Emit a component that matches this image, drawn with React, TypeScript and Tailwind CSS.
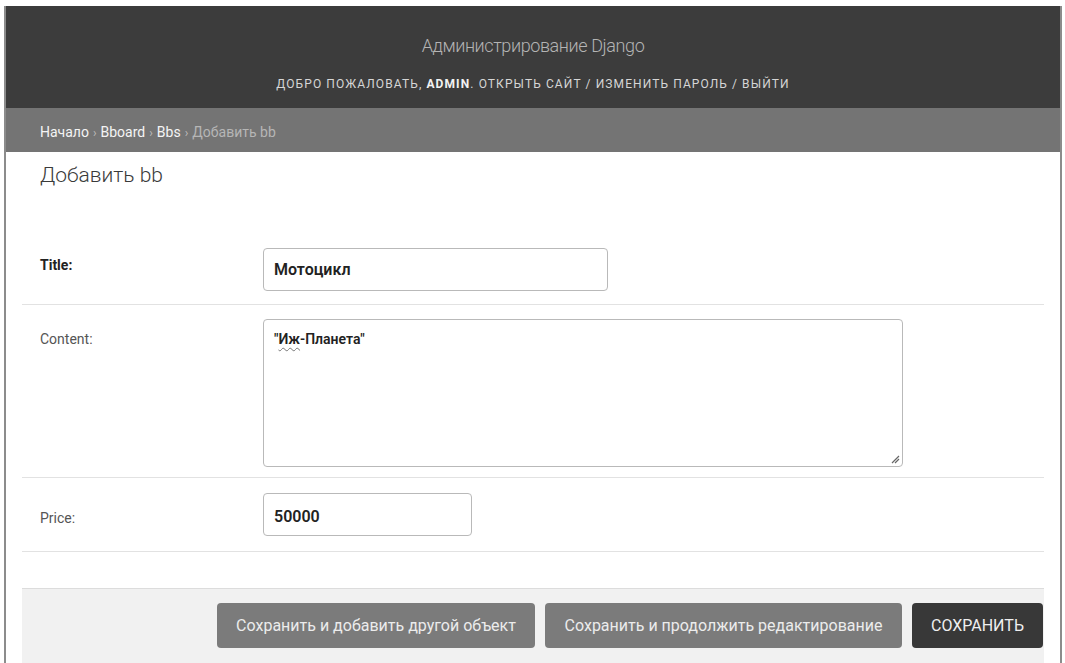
import React from "react";

function Field({
  label,
  required,
  children,
  rowClass,
  labelClass,
}: {
  label: string;
  required?: boolean;
  children: React.ReactNode;
  rowClass: string;
  labelClass: string;
}) {
  return (
    <div className={`flex items-start border-b border-[#e2e2e2] ${rowClass}`}>
      <div
        className={`w-[241px] shrink-0 pl-[18px] text-[14px] leading-[20px] ${labelClass} ${
          required ? "font-bold text-[#222]" : "text-[#555]"
        }`}
      >
        {label}
      </div>
      {children}
    </div>
  );
}

export default function App() {
  return (
    <div className="h-[663px] w-[1065px] overflow-hidden bg-white pt-[6px] font-['Roboto',sans-serif]">
      <div className="ml-[4px] h-[657px] w-[1058px] border-x-2 border-[#8c8c8c] bg-white">
        {/* header */}
        <div className="flex h-[102px] flex-col items-center bg-[#3c3c3c]">
          <div className="mt-[27px] text-[18px] font-light leading-[26px] tracking-[-0.4px] text-[#b4b4b4]">
            Администрирование Django
          </div>
          <div className="mt-[18px] text-[12px] uppercase leading-[14px] tracking-[1.1px] text-[#d6d6d6]">
            Добро пожаловать, <span className="font-bold text-[#f2f2f2]">admin</span>. Открыть сайт / Изменить пароль / Выйти
          </div>
        </div>

        {/* breadcrumbs */}
        <div className="flex h-[44px] items-center bg-[#747474] pl-[34px] pt-[5px] text-[14px] text-[#f4f4f4]">
          <span>Начало</span>
          <span className="mx-[4px] text-[12px] text-[#bdbdbd]">›</span>
          <span>Bboard</span>
          <span className="mx-[4px] text-[12px] text-[#bdbdbd]">›</span>
          <span>Bbs</span>
          <span className="mx-[4px] text-[12px] text-[#bdbdbd]">›</span>
          <span className="text-[#b6b6b6]">Добавить bb</span>
        </div>

        {/* content */}
        <div className="px-[16px]">
          <h1 className="pl-[18px] pt-[7px] text-[21px] font-light leading-[32px] text-[#3a3a3a]">
            Добавить bb
          </h1>

          <div className="mt-[52px]">
            <Field label="Title:" required rowClass="h-[62px] pt-[5px]" labelClass="pt-[7px]">
              <div className="flex h-[43px] w-[345px] items-center rounded-[4px] border border-[#b9b9b9] px-[10px] text-[16px] font-semibold text-[#222]">
                Мотоцикл
              </div>
            </Field>
            <Field label="Content:" rowClass="h-[173px] pt-[14px]" labelClass="pt-[10px]">
              <div className="relative h-[148px] w-[640px] rounded-[4px] border border-[#b9b9b9] px-[10px] py-[9px] text-[14px] font-semibold text-[#222]">
                "
                <span className="underline decoration-[#777] decoration-wavy decoration-1 underline-offset-[3px]">
                  Иж
                </span>
                -Планета"
                <svg
                  className="absolute bottom-[2px] right-[2px]"
                  width="10"
                  height="10"
                  viewBox="0 0 10 10"
                >
                  <path d="M9 2 L2 9 M9 5 L5 9" stroke="#666" strokeWidth="1.2" />
                </svg>
              </div>
            </Field>
            <Field label="Price:" rowClass="h-[74px] pt-[15px]" labelClass="pt-[15px]">
              <div className="flex h-[43px] w-[209px] items-center rounded-[4px] border border-[#b9b9b9] px-[10px] pt-[4px] text-[16px] font-semibold text-[#222]">
                50000
              </div>
            </Field>
          </div>
        </div>

        {/* submit row */}
        <div className="mx-[16px] mt-[36px] flex h-[80px] items-start justify-end gap-[10px] border-t border-[#dcdcdc] bg-[#f1f1f1] pr-[1px] pt-[14px]">
          <button className="h-[45px] w-[318px] rounded-[4px] bg-[#7b7b7b] text-[16px] text-[#ececec]">
            Сохранить и добавить другой объект
          </button>
          <button className="h-[45px] w-[357px] rounded-[4px] bg-[#7b7b7b] text-[16px] text-[#ececec]">
            Сохранить и продолжить редактирование
          </button>
          <button className="h-[45px] w-[131px] rounded-[4px] bg-[#383838] text-[16px] uppercase text-[#efefef]">
            Сохранить
          </button>
        </div>
      </div>
    </div>
  );
}
